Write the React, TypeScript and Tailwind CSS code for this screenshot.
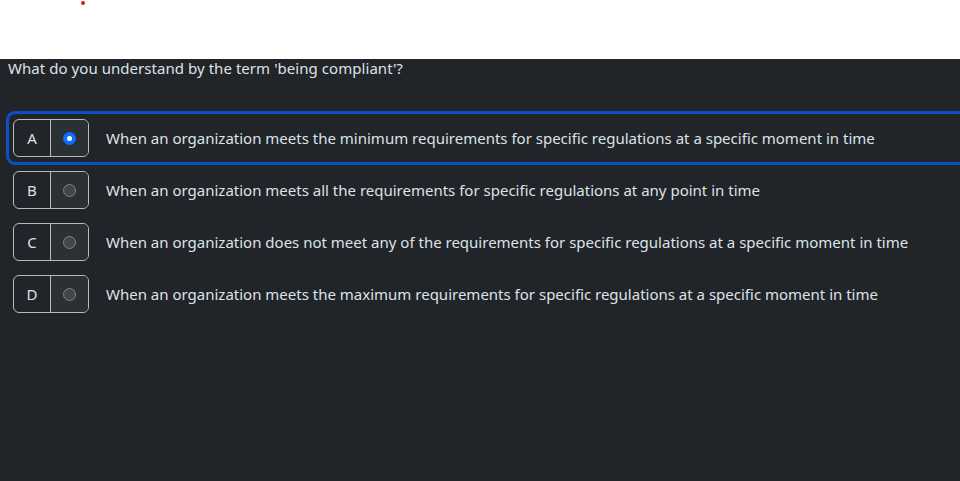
import React from 'react';

const options = [
  { key: 'A', text: 'When an organization meets the minimum requirements for specific regulations at a specific moment in time' },
  { key: 'B', text: 'When an organization meets all the requirements for specific regulations at any point in time' },
  { key: 'C', text: 'When an organization does not meet any of the requirements for specific regulations at a specific moment in time' },
  { key: 'D', text: 'When an organization meets the maximum requirements for specific regulations at a specific moment in time' },
];

const App: React.FC = () => {
  const selected = 'A';

  return (
    <div className="w-[960px] h-[481px] overflow-hidden bg-white font-['Noto_Sans',sans-serif]">
      {/* top strip */}
      <div className="h-[59px] bg-white">
        <div className="ml-[81px] pt-[1px]">
          <div className="w-[4px] h-[4px] rounded-full bg-[#e0141b]" />
        </div>
      </div>

      {/* quiz */}
      <div className="h-[422px] bg-[#212529] text-[#dee2e6] overflow-hidden">
        <p className="px-2 text-[15px] leading-[18px] tracking-[0.05px]">What do you understand by the term 'being compliant'?</p>

        <div className="pt-[35px] pl-[7px]">
          {options.map((o) => {
            const isSel = o.key === selected;
            return (
              <div
                key={o.key}
                className={`flex items-center h-[52px] w-[calc(100%+12px)] rounded-lg ${
                  isSel ? 'outline-3 outline-solid outline-[#0b50c6] -outline-offset-2' : ''
                }`}
              >
                <div className="ml-[6px] flex h-[38px] w-[76px] shrink-0 rounded-md border border-[#b9bcbf] overflow-hidden">
                  <div className="w-[37px] flex items-center justify-center text-[15px] border-r border-[#b9bcbf]">
                    {o.key}
                  </div>
                  <div className="flex-1 flex items-center justify-center bg-[#2b3035]">
                    {isSel ? (
                      <span className="w-[13px] h-[13px] rounded-full bg-[#0d6efd] flex items-center justify-center">
                        <span className="w-[5px] h-[5px] rounded-full bg-white" />
                      </span>
                    ) : (
                      <span className="w-[13px] h-[13px] rounded-full border border-[#808488] bg-[#42464b]" />
                    )}
                  </div>
                </div>
                <span className="ml-[17px] text-[15px] whitespace-nowrap">{o.text}</span>
              </div>
            );
          })}
        </div>
      </div>
    </div>
  );
};

export default App;
